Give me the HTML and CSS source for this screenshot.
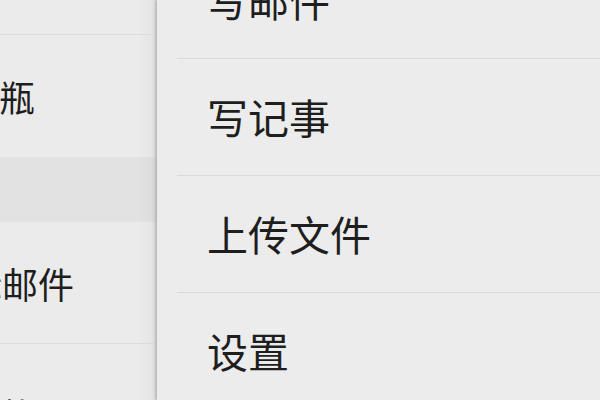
FILE: index.html
```html
<!DOCTYPE html>
<html lang="zh-CN">
<head>
<meta charset="utf-8">
<title>菜单</title>
<link rel="stylesheet" href="styles.css">
</head>
<body>
<div class="screen">
  <aside class="sidebar">
    <div class="side-row side-row--top"></div>
    <div class="side-row side-row--bottle"><span class="side-text">漂流瓶</span></div>
    <div class="side-band"></div>
    <div class="side-row side-row--mail"><span class="side-text">星标邮件</span></div>
    <div class="side-row side-row--file"><span class="side-text">附件</span></div>
  </aside>
  <main class="menu">
    <div class="menu-item menu-item--first"><span class="menu-text">写邮件</span></div>
    <div class="menu-item"><span class="menu-text">写记事</span></div>
    <div class="menu-item"><span class="menu-text">上传文件</span></div>
    <div class="menu-item menu-item--last"><span class="menu-text">设置</span></div>
  </main>
</div>
</body>
</html>
```

FILE: styles.css
```css
* { box-sizing: border-box; }
html, body {
  margin: 0;
  padding: 0;
  width: 600px;
  height: 400px;
  overflow: hidden;
  background: #ebebeb;
  font-family: "Noto Sans CJK SC", "Noto Sans", sans-serif;
  color: #1e1e1e;
}
.screen {
  display: flex;
  width: 600px;
  height: 400px;
  overflow: hidden;
}
.sidebar {
  width: 157px;
  flex: none;
  display: flex;
  flex-direction: column;
  overflow: hidden;
  background: linear-gradient(to right, #ebebeb 0, #ebebeb 139px, #e4e4e4 154px, #d6d6d6 157px);
}
.side-row {
  flex: none;
  display: flex;
  align-items: center;
  white-space: nowrap;
  font-size: 36px;
  line-height: 1;
}
.side-row--top {
  height: 35px;
  border-bottom: 1px solid #dcdcdc;
}
.side-row--bottle { height: 122px; }
.side-row--bottle .side-text { margin-left: -73px; }
.side-band {
  flex: none;
  height: 65px;
  background: linear-gradient(to right, #e2e2e2 0, #e2e2e2 139px, #dcdcdc 154px, #d2d2d2 157px);
}
.side-row--mail {
  height: 122px;
  border-bottom: 1px solid #dcdcdc;
}
.side-row--mail .side-text { margin-left: -70px; }
.side-row--file { height: 110px; padding-top: 52px; align-items: flex-start; }
.side-row--file .side-text { margin-left: -37px; }

.menu {
  flex: 1;
  display: flex;
  flex-direction: column;
  background: #ececec;
  position: relative;
  box-shadow: -2px 0 3px rgba(0, 0, 0, 0.16);
}
.menu-item {
  flex: none;
  height: 117px;
  margin-left: 20px;
  padding-left: 30px;
  display: flex;
  align-items: center;
  border-bottom: 1px solid #dadada;
  font-size: 41px;
  line-height: 1;
  white-space: nowrap;
}
.menu-item--first { margin-top: -58px; }
.menu-item--last { border-bottom: none; }
.menu-text { display: block; margin-top: -2px; }
```
